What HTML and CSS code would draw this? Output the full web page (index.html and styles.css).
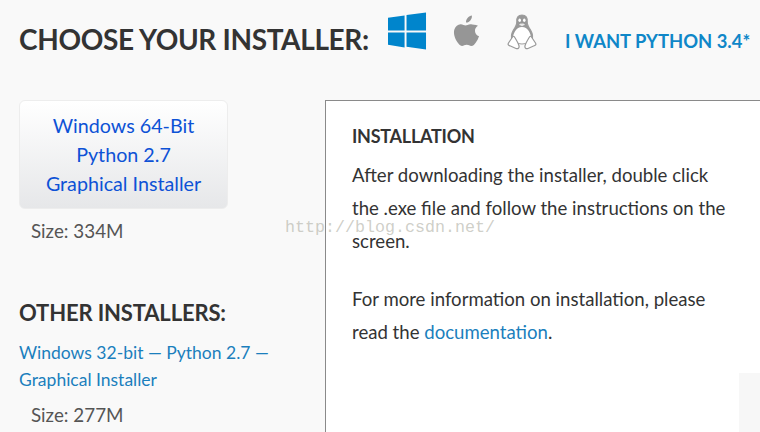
FILE: index.html
```html
<!DOCTYPE html>
<html lang="en">
<head>
<meta charset="utf-8">
<title>Choose your installer</title>
<link rel="stylesheet" href="styles.css">
</head>
<body>
<header class="top">
  <h1 class="title">CHOOSE YOUR INSTALLER:</h1>
  <svg class="ico win" viewBox="0 0 40 38" aria-hidden="true"><path fill="#0085cc" d="M0 5.500 17 3v15.600H0zM19 2.700 39 0v18.600H19zM0 20.600h17v15.200L0 33.200zM19 20.600h20V38l-20-2.800z"/></svg>
  <svg class="ico apple" viewBox="0 0 28 32" aria-hidden="true"><path fill="#969696" d="M19.600 0c.2 2-.5 3.700-1.600 5-1.100 1.300-2.800 2.300-4.500 2.100-.2-1.800.6-3.600 1.600-4.700C16.300 1.100 18.100.2 19.600 0zM25.900 10.600c-2 1.300-3.200 3.100-3.100 5.300.1 2.700 1.700 4.500 4.200 5.500-.7 2.200-1.800 4.400-3.300 6.500-1.300 1.800-2.700 3.600-4.700 3.600-1.900 0-2.500-1.200-4.800-1.200-2.300 0-3 1.200-4.800 1.200-2 .1-3.500-2-4.800-3.800C1.900 24 0 18.200 1.600 14c1-2.700 3.300-4.800 6.300-4.900 2-.1 3.800 1.300 5.100 1.300 1.300 0 3.300-1.600 5.700-1.300 1.500.1 4.700.5 7.200 1.500z"/></svg>
  <svg class="ico tux" viewBox="0 0 30 36" aria-hidden="true">
    <path fill="#fff" stroke="#a0a0a0" stroke-width="1.200" d="M15 1c-4 0-5.500 3-5.200 6.500.2 2.500-.3 3.800-1.800 6C6 16.300 4 20 4.500 23.500 5 27 9 30 15 30s10-3 10.500-6.500C26 20 24 16.300 22 13.500c-1.500-2.200-2-3.500-1.800-6C20.500 4 19 1 15 1z"/>
    <path fill="#999" d="M15 1c-4 0-5.500 3-5.200 6.500.2 2.500-.3 3.800-1.800 6C6 16.300 4 20 4.500 23.500c.2 1.200.8 2.300 1.700 3.300-.9-3.800.6-8 2.600-10.600 1.300-1.700 3-3.200 6.200-3.200s4.900 1.500 6.200 3.200c2 2.600 3.500 6.800 2.600 10.600.9-1 1.500-2.100 1.700-3.300C26 20 24 16.300 22 13.500c-1.500-2.200-2-3.500-1.800-6C20.500 4 19 1 15 1z"/>
    <path fill="#e9e9e9" stroke="#8f8f8f" stroke-width=".8" d="M11.800 9.800c1.500-1 5-1 6.400 0 .4 1-1.900 2.700-3.200 2.700s-3.600-1.700-3.200-2.700z"/>
    <ellipse cx="12.700" cy="6.300" rx="1.300" ry="1.800" fill="#fff"/><ellipse cx="17.300" cy="6.300" rx="1.300" ry="1.800" fill="#fff"/>
    <path fill="#fff" stroke="#999" stroke-width="1.200" d="M5.500 23 1.500 29c-1 1.600 0 2.500 2 3l5.500 2.500c2 .7 3.500-.5 3-2.500-.6-3-3-6.500-4.500-9-.6-1-1.400-1-2 0zM24.500 23l4 6c1 1.600 0 2.500-2 3L21 34.500c-2 .7-3.500-.5-3-2.500.6-3 3-6.500 4.500-9 .6-1 1.400-1 2 0z"/>
  </svg>
  <a class="alt" href="#">I WANT PYTHON 3.4*</a>
</header>
<main class="columns">
  <aside class="side">
    <a class="btn" href="#">Windows 64-Bit<br>Python 2.7<br>Graphical Installer</a>
    <p class="size">Size: 334M</p>
    <h2 class="other">OTHER INSTALLERS:</h2>
    <a class="link" href="#">Windows 32-bit — Python 2.7 — Graphical Installer</a>
    <p class="size small">Size: 277M</p>
  </aside>
  <section class="panel">
    <h3 class="head">INSTALLATION</h3>
    <p class="copy">After downloading the installer, double click the .exe file and follow the instructions on the screen.</p>
    <p class="copy">For more information on installation, please read the <a class="inline" href="#">documentation</a>.</p>
  </section>
</main>
<div class="mark">http://blog.csdn.net/</div>
<div class="corner"></div>
</body>
</html>
```
FILE: styles.css
```css
html, body {
  margin: 0;
  padding: 0;
  height: 432px;
  overflow: hidden;
}
body {
  width: 760px;
  background: #f9f9f9;
  color: #333;
  font-family: Lato, "Open Sans", sans-serif;
  position: relative;
}
a { text-decoration: none; }
.top {
  display: flex;
  align-items: flex-start;
  height: 100px;
  padding-left: 19px;
  box-sizing: border-box;
}
.title {
  margin: 19px 19px 0 0;
  font-size: 28px;
  line-height: 40px;
  font-weight: 700;
  letter-spacing: -0.35px;
  color: #333;
  white-space: nowrap;
}
.ico { display: block; flex: none; }
.win { width: 39px; height: 38px; margin-top: 12px; }
.apple { width: 27px; height: 32px; margin: 15px 0 0 26px; }
.tux { width: 30px; height: 36px; margin: 14px 0 0 27px; }
.alt {
  margin: 27px 0 0 28px;
  color: #0f87c8;
  font-size: 18.400px;
  line-height: 28px;
  font-weight: 700;
  white-space: nowrap;
}
.columns { display: flex; align-items: flex-start; }
.side { width: 325px; flex: none; padding-left: 19px; box-sizing: border-box; }
.btn {
  display: block;
  width: 209px;
  height: 109px;
  box-sizing: border-box;
  padding-top: 10px;
  text-align: center;
  font-size: 19.700px;
  line-height: 29px;
  color: #0d52d6;
  background: linear-gradient(#ffffff, #e6e7e9);
  border: 1px solid #ededed;
  border-radius: 6px;
}
.size {
  margin: 7px 0 0 12px;
  font-size: 18.800px;
  line-height: 29px;
  color: #555;
}
.other {
  margin: 51px 0 0;
  font-size: 22px;
  line-height: 34px;
  font-weight: 700;
  letter-spacing: -0.150px;
  color: #333;
}
.link {
  display: block;
  width: 260px;
  margin-top: 9px;
  font-size: 17.500px;
  line-height: 27px;
  color: #1b7fbd;
}
.small { margin-top: 7px; }
.panel {
  width: 435px;
  height: 332px;
  flex: none;
  box-sizing: border-box;
  background: #fff;
  border-left: 1px solid #8a8a8a;
  border-top: 1px solid #8a8a8a;
  padding: 21px 0 0 26px;
}
.head {
  margin: 0;
  font-size: 18px;
  line-height: 28px;
  font-weight: 700;
  letter-spacing: -0.250px;
  color: #333;
}
.copy {
  width: 385px;
  margin: 9px 0 25px;
  font-size: 18.600px;
  line-height: 33px;
  color: #333;
}
.inline { color: #1b7fbd; }
.mark {
  position: absolute;
  left: 285px;
  top: 217px;
  font-family: "Liberation Mono", monospace;
  font-size: 16.670px;
  line-height: 22px;
  color: rgba(180, 180, 170, 0.65);
  white-space: nowrap;
}
.corner {
  position: absolute;
  left: 739px;
  top: 373px;
  width: 21px;
  height: 59px;
  background: #f7f7f7;
}
```
